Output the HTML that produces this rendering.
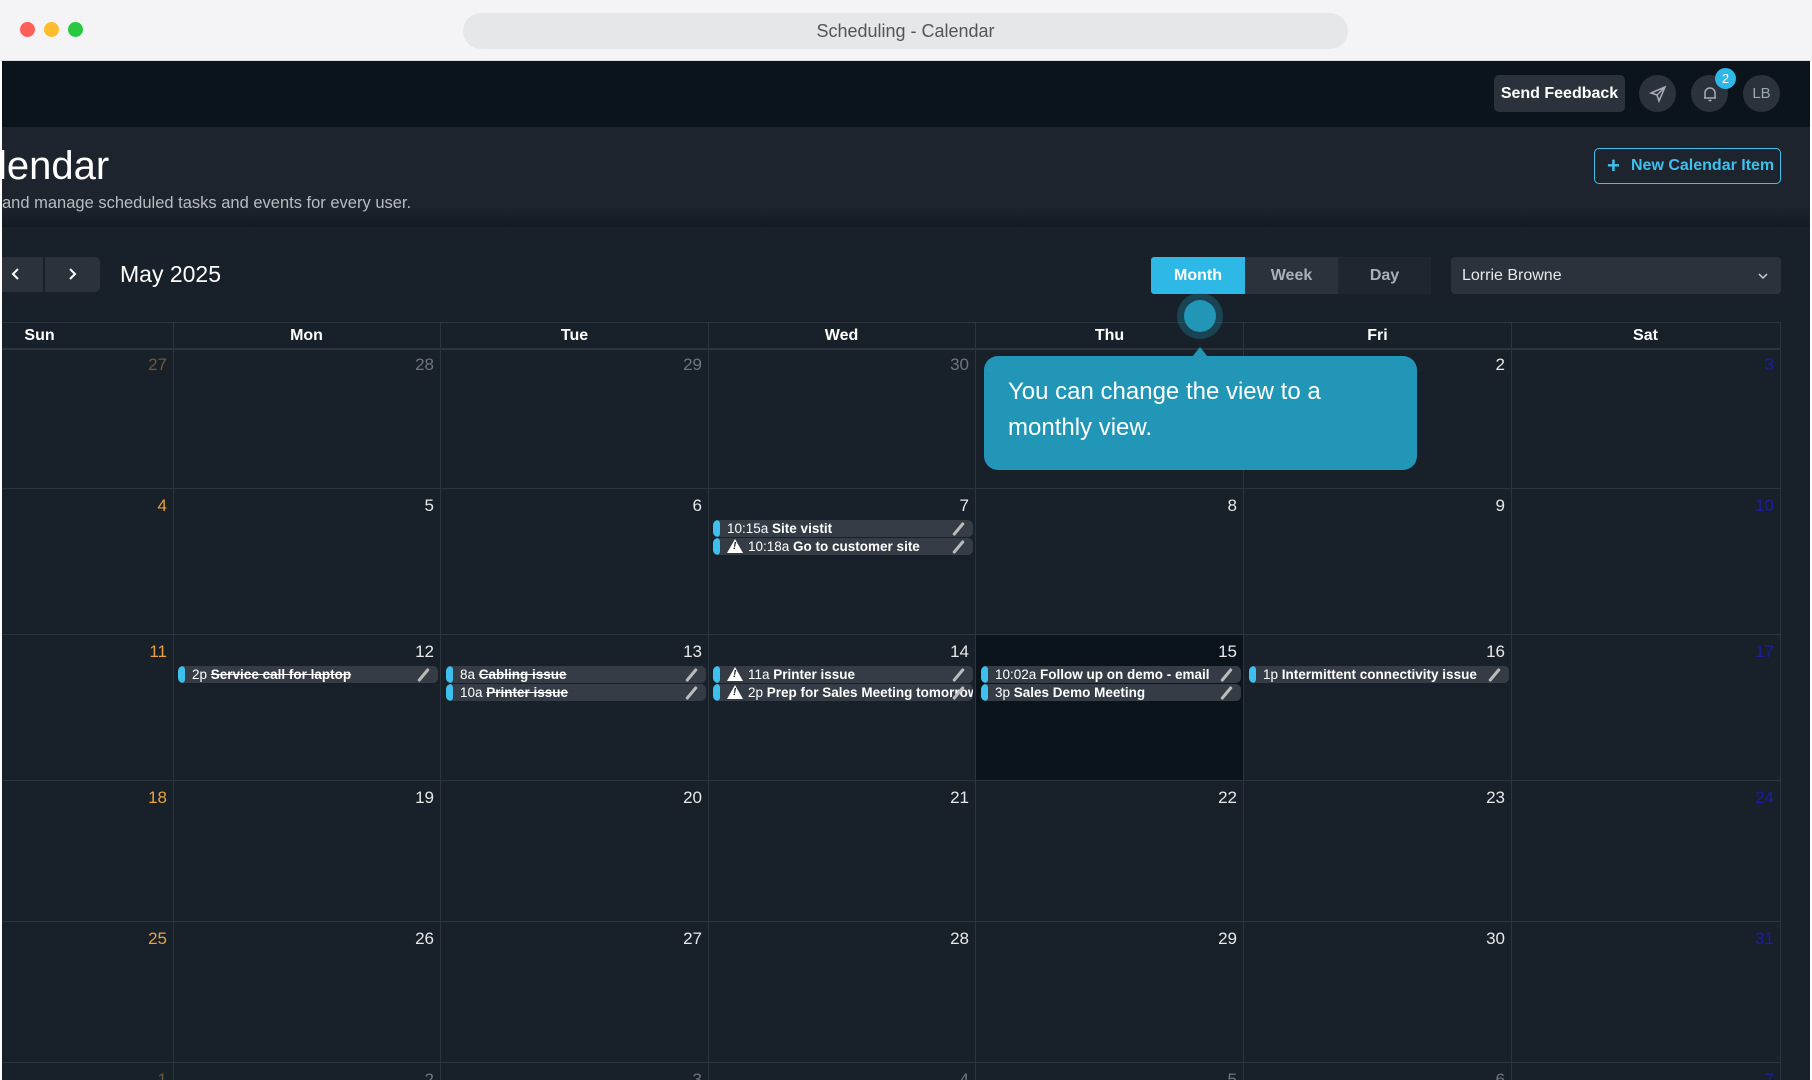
<!DOCTYPE html>
<html><head><meta charset="utf-8"><style>
*{box-sizing:border-box;margin:0;padding:0}
body{width:1812px;height:1080px;overflow:hidden;background:#fff;font-family:"Liberation Sans",sans-serif;position:relative}
.a{position:absolute}
.tb{left:0;top:0;width:1812px;height:61px;background:#f4f4f6;border-bottom:1px solid #ddd}
.dot{width:15px;height:15px;border-radius:50%;top:22px}
.url{left:463px;top:13px;width:885px;height:36px;border-radius:18px;background:#e6e7ea;color:#555;font-size:18px;text-align:center;line-height:36px}
.win{left:2px;top:61px;width:1808px;height:1019px;background:#18202a;overflow:hidden}
.nav{left:0;top:0;width:1808px;height:66px;background:#0b131b}
.hdr{left:0;top:66px;width:1808px;height:100px;background:linear-gradient(#1d242e 80%,#141a22)}
.btn{background:#2b323b;border-radius:5px;color:#fff;font-weight:bold}
.circ{width:37px;height:37px;border-radius:50%;background:#2b323b;color:#9aa;text-align:center;line-height:37px;font-size:15px}
.cell{position:absolute;border-right:1px solid #2c343e;border-bottom:1px solid #2c343e}
.dn{position:absolute;right:6px;top:7px;font-size:17px;color:#e8e8e8}
.hd{position:absolute;top:0;height:26px;line-height:26px;text-align:center;font-weight:bold;color:#fff;font-size:16px;border-right:1px solid #2c343e}
.ev{position:absolute;height:17px;border-radius:5px;background:#353c46;color:#fff;font-size:13.5px;line-height:17px;padding-left:14px;padding-right:28px;white-space:nowrap;overflow:hidden}
.ev:before{content:"";position:absolute;left:0;top:0;width:7px;height:17px;background:#3ec0ee;border-radius:4px}
.ev b,.ev s{font-weight:bold}
.ev:after{content:"";position:absolute;right:13px;top:1px;width:3px;height:16px;background:#bbb;transform:rotate(40deg);border-radius:1px}
.warn{display:inline-block;width:0;height:0;border-left:8px solid transparent;border-right:8px solid transparent;border-bottom:14px solid #fff;vertical-align:-2px;margin-right:5px;position:relative}
.warn:after{content:"!";position:absolute;left:-2px;top:2px;font-size:10px;line-height:11px;color:#222;font-weight:bold}
</style></head><body>
<div class="a tb"></div>
<div class="a dot" style="left:20px;background:#fe5f57"></div>
<div class="a dot" style="left:44px;background:#febc2e"></div>
<div class="a dot" style="left:68px;background:#28c840"></div>
<div class="a url">Scheduling - Calendar</div>
<div class="a win">
 <div class="a nav"></div>
 <div class="a btn" style="left:1492px;top:14px;width:131px;height:37px;line-height:37px;text-align:center;font-size:16px">Send Feedback</div>
 <div class="a circ" style="left:1637px;top:14px"><svg width="20" height="20" viewBox="0 0 20 20" style="margin-top:9px"><path d="M17 3 L3 9 L9 11 L11 17 Z M9 11 L17 3" fill="none" stroke="#aab" stroke-width="1.5"/></svg></div>
 <div class="a circ" style="left:1689px;top:14px"><svg width="20" height="20" viewBox="0 0 20 20" style="margin-top:9px"><path d="M5 14 V9 a5 5 0 0 1 10 0 V14 H4 H16 M8.5 16.5 h3" fill="none" stroke="#aab" stroke-width="1.5"/></svg></div>
 <div class="a" style="left:1713px;top:7px;width:21px;height:21px;border-radius:50%;background:#2eb8e6;color:#fff;font-size:13px;text-align:center;line-height:21px">2</div>
 <div class="a circ" style="left:1741px;top:14px">LB</div>
 <div class="a hdr"></div>
 <div class="a" style="left:-4px;top:83px;color:#fff;font-size:40px">lendar</div>
 <div class="a" style="left:0;top:133px;color:#b8bcc2;font-size:16.5px">and manage scheduled tasks and events for every user.</div>
 <div class="a" style="left:1592px;top:87px;width:187px;height:36px;border:1.5px solid #3ec0ee;border-radius:5px;color:#3ec0ee;font-weight:bold;font-size:16px;line-height:33px;padding-left:36px">New Calendar Item</div>
 <div class="a" style="left:1605px;top:95px;color:#3ec0ee;font-size:22px;line-height:20px;font-weight:bold">+</div>
 <div class="a btn" style="left:0;top:196px;width:41px;height:35px;border-radius:0"></div>
 <div class="a btn" style="left:43px;top:196px;width:55px;height:35px;border-radius:0 5px 5px 0"></div>
 <svg class="a" style="left:6px;top:205px" width="16" height="16"><path d="M10 3 L5 8 L10 13" stroke="#fff" stroke-width="2" fill="none"/></svg>
 <svg class="a" style="left:62px;top:205px" width="16" height="16"><path d="M6 3 L11 8 L6 13" stroke="#fff" stroke-width="2" fill="none"/></svg>
 <div class="a" style="left:118px;top:200px;color:#fff;font-size:23px">May 2025</div>
 <div class="a" style="left:1149px;top:196px;width:94px;height:37px;background:#2eb8e6;color:#fff;font-weight:bold;font-size:16px;line-height:37px;text-align:center;border-radius:3px 0 0 3px">Month</div>
 <div class="a" style="left:1243px;top:196px;width:93px;height:37px;background:#2b323b;color:#aab0b8;font-weight:bold;font-size:16px;line-height:37px;text-align:center">Week</div>
 <div class="a" style="left:1336px;top:196px;width:93px;height:37px;background:#1f262f;color:#aab0b8;font-weight:bold;font-size:16px;line-height:37px;text-align:center">Day</div>
 <div class="a" style="left:1449px;top:196px;width:330px;height:37px;background:#2b323b;border-radius:4px;color:#e8e8e8;font-size:16px;line-height:37px;padding-left:11px">Lorrie Browne</div>
 <svg class="a" style="left:1755px;top:209px" width="12" height="12"><path d="M2 4 L6 8 L10 4" stroke="#ccc" stroke-width="1.5" fill="none"/></svg>
 <div class="a" style="left:0;top:261px;width:1779px;height:27px;border-top:1px solid #2c343e">
  <div class="hd" style="left:-96px;width:268px">Sun</div>
  <div class="hd" style="left:171px;width:268px">Mon</div>
  <div class="hd" style="left:439px;width:268px">Tue</div>
  <div class="hd" style="left:706px;width:268px">Wed</div>
  <div class="hd" style="left:974px;width:268px">Thu</div>
  <div class="hd" style="left:1242px;width:268px">Fri</div>
  <div class="hd" style="left:1509px;width:270px">Sat</div>
  <div class="a" style="left:0;top:25px;width:1779px;border-top:2px solid #2c343e"></div>
 </div>
 <div class="a" style="left:0;top:287px;width:1779px;height:732px;overflow:hidden">
  <div class="cell" style="left:-96px;top:0;width:268px;height:141px"><span class="dn" style="color:#6b5a3c">27</span></div>
  <div class="cell" style="left:171px;top:0;width:268px;height:141px"><span class="dn" style="color:#6f757d">28</span></div>
  <div class="cell" style="left:439px;top:0;width:268px;height:141px"><span class="dn" style="color:#6f757d">29</span></div>
  <div class="cell" style="left:706px;top:0;width:268px;height:141px"><span class="dn" style="color:#6f757d">30</span></div>
  <div class="cell" style="left:974px;top:0;width:268px;height:141px"><span class="dn">1</span></div>
  <div class="cell" style="left:1242px;top:0;width:268px;height:141px"><span class="dn">2</span></div>
  <div class="cell" style="left:1509px;top:0;width:270px;height:141px"><span class="dn" style="color:#1a1fa0">3</span></div>
  <div class="cell" style="left:-96px;top:141px;width:268px;height:146px"><span class="dn" style="color:#e8a33d">4</span></div>
  <div class="cell" style="left:171px;top:141px;width:268px;height:146px"><span class="dn">5</span></div>
  <div class="cell" style="left:439px;top:141px;width:268px;height:146px"><span class="dn">6</span></div>
  <div class="cell" style="left:706px;top:141px;width:268px;height:146px"><span class="dn">7</span>
   <div class="ev" style="left:5px;top:31px;width:260px">10:15a <b>Site vistit</b></div>
   <div class="ev" style="left:5px;top:49px;width:260px"><i class="warn"></i>10:18a <b>Go to customer site</b></div>
  </div>
  <div class="cell" style="left:974px;top:141px;width:268px;height:146px"><span class="dn">8</span></div>
  <div class="cell" style="left:1242px;top:141px;width:268px;height:146px"><span class="dn">9</span></div>
  <div class="cell" style="left:1509px;top:141px;width:270px;height:146px"><span class="dn" style="color:#1a1fa0">10</span></div>
  <div class="cell" style="left:-96px;top:287px;width:268px;height:146px"><span class="dn" style="color:#e8a33d">11</span></div>
  <div class="cell" style="left:171px;top:287px;width:268px;height:146px"><span class="dn">12</span>
   <div class="ev" style="left:5px;top:31px;width:260px">2p <s>Service call for laptop</s></div>
  </div>
  <div class="cell" style="left:439px;top:287px;width:268px;height:146px"><span class="dn">13</span>
   <div class="ev" style="left:5px;top:31px;width:260px">8a <s>Cabling issue</s></div>
   <div class="ev" style="left:5px;top:49px;width:260px">10a <s>Printer issue</s></div>
  </div>
  <div class="cell" style="left:706px;top:287px;width:268px;height:146px"><span class="dn">14</span>
   <div class="ev" style="left:5px;top:31px;width:260px"><i class="warn"></i>11a <b>Printer issue</b></div>
   <div class="ev" style="left:5px;top:49px;width:260px"><i class="warn"></i>2p <b>Prep for Sales Meeting tomorrow</b></div>
  </div>
  <div class="cell" style="left:974px;top:287px;width:268px;height:146px;background:#0b131b"><span class="dn">15</span>
   <div class="ev" style="left:5px;top:31px;width:260px">10:02a <b>Follow up on demo - email</b></div>
   <div class="ev" style="left:5px;top:49px;width:260px">3p <b>Sales Demo Meeting</b></div>
  </div>
  <div class="cell" style="left:1242px;top:287px;width:268px;height:146px"><span class="dn">16</span>
   <div class="ev" style="left:5px;top:31px;width:260px">1p <b>Intermittent connectivity issue</b></div>
  </div>
  <div class="cell" style="left:1509px;top:287px;width:270px;height:146px"><span class="dn" style="color:#1a1fa0">17</span></div>
  <div class="cell" style="left:-96px;top:433px;width:268px;height:141px"><span class="dn" style="color:#e8a33d">18</span></div>
  <div class="cell" style="left:171px;top:433px;width:268px;height:141px"><span class="dn">19</span></div>
  <div class="cell" style="left:439px;top:433px;width:268px;height:141px"><span class="dn">20</span></div>
  <div class="cell" style="left:706px;top:433px;width:268px;height:141px"><span class="dn">21</span></div>
  <div class="cell" style="left:974px;top:433px;width:268px;height:141px"><span class="dn">22</span></div>
  <div class="cell" style="left:1242px;top:433px;width:268px;height:141px"><span class="dn">23</span></div>
  <div class="cell" style="left:1509px;top:433px;width:270px;height:141px"><span class="dn" style="color:#1a1fa0">24</span></div>
  <div class="cell" style="left:-96px;top:574px;width:268px;height:141px"><span class="dn" style="color:#e8a33d">25</span></div>
  <div class="cell" style="left:171px;top:574px;width:268px;height:141px"><span class="dn">26</span></div>
  <div class="cell" style="left:439px;top:574px;width:268px;height:141px"><span class="dn">27</span></div>
  <div class="cell" style="left:706px;top:574px;width:268px;height:141px"><span class="dn">28</span></div>
  <div class="cell" style="left:974px;top:574px;width:268px;height:141px"><span class="dn">29</span></div>
  <div class="cell" style="left:1242px;top:574px;width:268px;height:141px"><span class="dn">30</span></div>
  <div class="cell" style="left:1509px;top:574px;width:270px;height:141px"><span class="dn" style="color:#1a1fa0">31</span></div>
  <div class="cell" style="left:-96px;top:715px;width:268px;height:141px"><span class="dn" style="color:#6b5a3c">1</span></div>
  <div class="cell" style="left:171px;top:715px;width:268px;height:141px"><span class="dn" style="color:#6f757d">2</span></div>
  <div class="cell" style="left:439px;top:715px;width:268px;height:141px"><span class="dn" style="color:#6f757d">3</span></div>
  <div class="cell" style="left:706px;top:715px;width:268px;height:141px"><span class="dn" style="color:#6f757d">4</span></div>
  <div class="cell" style="left:974px;top:715px;width:268px;height:141px"><span class="dn" style="color:#6f757d">5</span></div>
  <div class="cell" style="left:1242px;top:715px;width:268px;height:141px"><span class="dn" style="color:#6f757d">6</span></div>
  <div class="cell" style="left:1509px;top:715px;width:270px;height:141px"><span class="dn" style="color:#1a1fa0">7</span></div>
 </div>
 <div class="a" style="left:1175px;top:232px;width:46px;height:46px;border-radius:50%;background:rgba(33,150,182,0.3)"></div>
 <div class="a" style="left:1182px;top:239px;width:32px;height:32px;border-radius:50%;background:#2196b6"></div>
 <div class="a" style="left:1190px;top:286px;width:0;height:0;border-left:8px solid transparent;border-right:8px solid transparent;border-bottom:10px solid #2196b6"></div>
 <div class="a" style="left:982px;top:295px;width:433px;height:114px;border-radius:14px;background:#2196b6;color:#fff;font-size:24px;line-height:36px;padding:18px 24px">You can change the view to a monthly view.</div>
</div>
</body></html>
